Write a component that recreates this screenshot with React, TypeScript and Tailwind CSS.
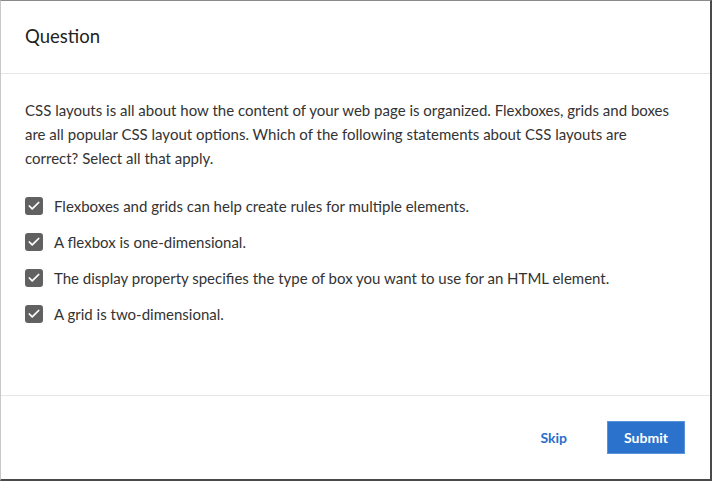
import { Check } from "lucide-react";

const OPTIONS = [
  "Flexboxes and grids can help create rules for multiple elements.",
  "A flexbox is one-dimensional.",
  "The display property specifies the type of box you want to use for an HTML element.",
  "A grid is two-dimensional.",
];

export default function App() {
  return (
    <div
      className="w-[712px] h-[481px] bg-white flex flex-col border-t border-t-[#8a8a8a] border-l border-l-[#c8c8c8] border-r-2 border-r-[#4a4a4a] border-b-2 border-b-[#4a4a4a] text-[#333333]"
      style={{ fontFamily: "Lato, 'Liberation Sans', sans-serif" }}
    >
      {/* header */}
      <div className="h-[73px] shrink-0 flex items-center px-6 border-b border-[#e6e6e6]">
        <h2 className="text-[18.5px] text-[#222222] font-normal">Question</h2>
      </div>

      {/* body */}
      <div className="flex-1 px-6 pt-6">
        <p className="text-[15px] leading-6">
          CSS layouts is all about how the content of your web page is organized. Flexboxes, grids and boxes
          <br />
          are all popular CSS layout options. Which of the following statements about CSS layouts are
          <br />
          correct? Select all that apply.
        </p>
        <ul className="mt-[18px]">
          {OPTIONS.map((opt) => (
            <li key={opt} className="h-9 flex items-center gap-[11px]">
              <span className="w-[18px] h-[18px] rounded-[3px] bg-[#616161] flex items-center justify-center shrink-0">
                <Check className="w-[14px] h-[14px] text-white" strokeWidth={3} />
              </span>
              <span className="text-[15px]">{opt}</span>
            </li>
          ))}
        </ul>
      </div>

      {/* footer */}
      <div className="h-[84px] shrink-0 border-t border-[#e6e6e6] flex items-center justify-end gap-6 pl-6 pr-[25px]">
        <button className="px-4 h-[33px] text-[14px] font-bold text-[#2a6fc9]">Skip</button>
        <button className="w-[78px] h-[33px] bg-[#2b72cc] border border-[#5a93dc] text-white text-[14px] font-bold">
          Submit
        </button>
      </div>
    </div>
  );
}
